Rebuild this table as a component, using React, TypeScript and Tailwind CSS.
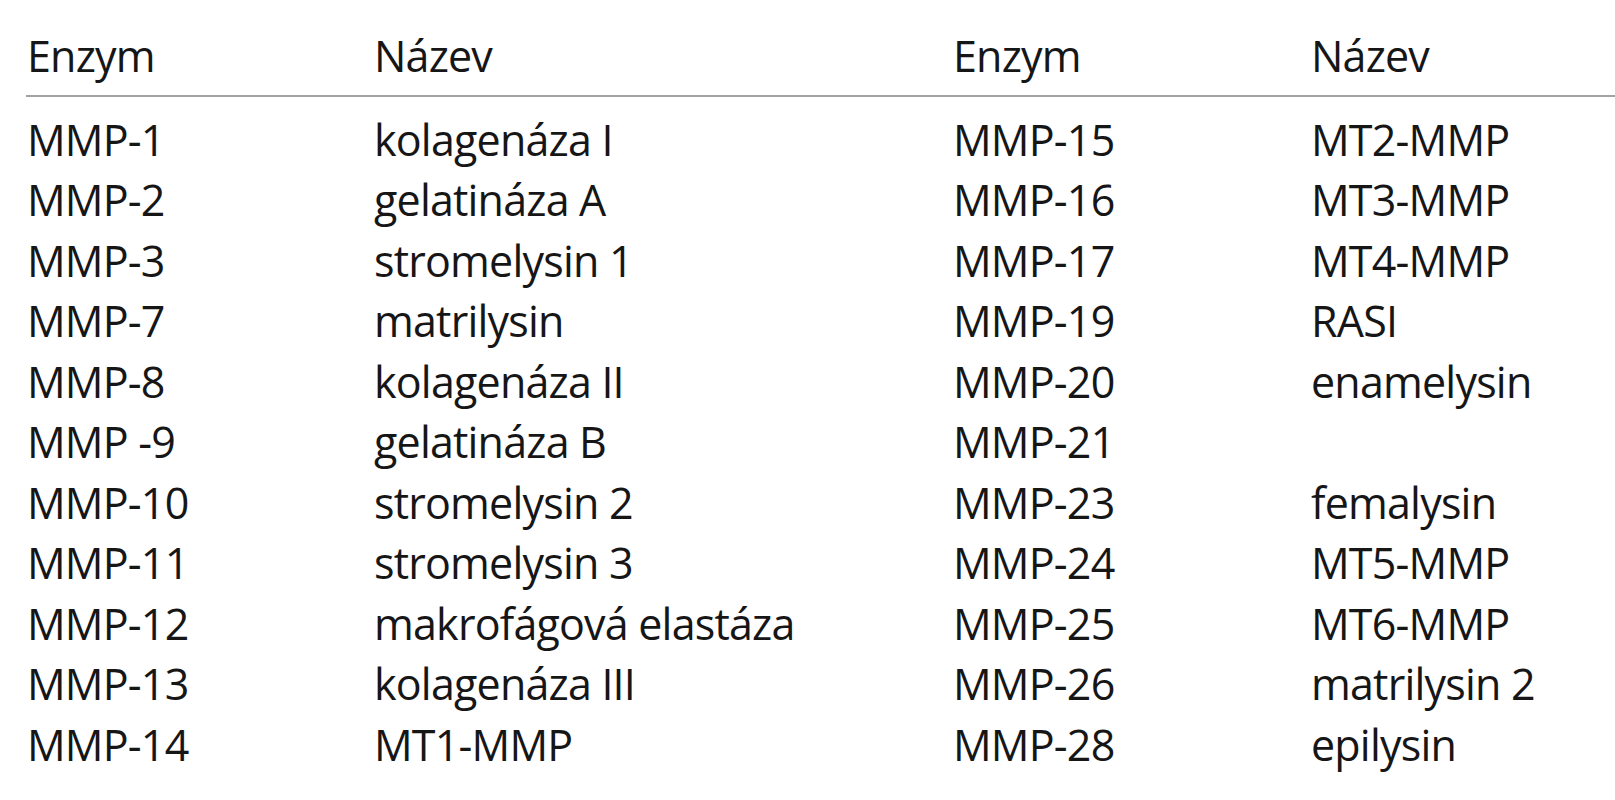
import React from "react";

const rows: [string, string, string, string][] = [
  ["MMP-1", "kolagenáza I", "MMP-15", "MT2-MMP"],
  ["MMP-2", "gelatináza A", "MMP-16", "MT3-MMP"],
  ["MMP-3", "stromelysin 1", "MMP-17", "MT4-MMP"],
  ["MMP-7", "matrilysin", "MMP-19", "RASI"],
  ["MMP-8", "kolagenáza II", "MMP-20", "enamelysin"],
  ["MMP -9", "gelatináza B", "MMP-21", ""],
  ["MMP-10", "stromelysin 2", "MMP-23", "femalysin"],
  ["MMP-11", "stromelysin 3", "MMP-24", "MT5-MMP"],
  ["MMP-12", "makrofágová elastáza", "MMP-25", "MT6-MMP"],
  ["MMP-13", "kolagenáza III", "MMP-26", "matrilysin 2"],
  ["MMP-14", "MT1-MMP", "MMP-28", "epilysin"],
];

const cols = "grid grid-cols-[347px_579px_358px_1fr]";

const App = () => {
  return (
    <div className="min-h-screen w-full bg-white pl-[27px] pt-[26px] text-[43px] leading-[60.5px] tracking-[-0.8px] text-[#161616] font-['Open_Sans',sans-serif]">
      <div className={cols}>
        <div>Enzym</div>
        <div>Název</div>
        <div>Enzym</div>
        <div>Název</div>
      </div>
      <div className="mt-[8px] -ml-[1px] h-[2px] bg-[#a3a3a3]" />
      <div className="mt-[13px]">
        {rows.map((r) => (
          <div key={r[0]} className={cols}>
            <div>{r[0]}</div>
            <div>{r[1]}</div>
            <div>{r[2]}</div>
            <div>{r[3]}</div>
          </div>
        ))}
      </div>
    </div>
  );
};

export default App;
